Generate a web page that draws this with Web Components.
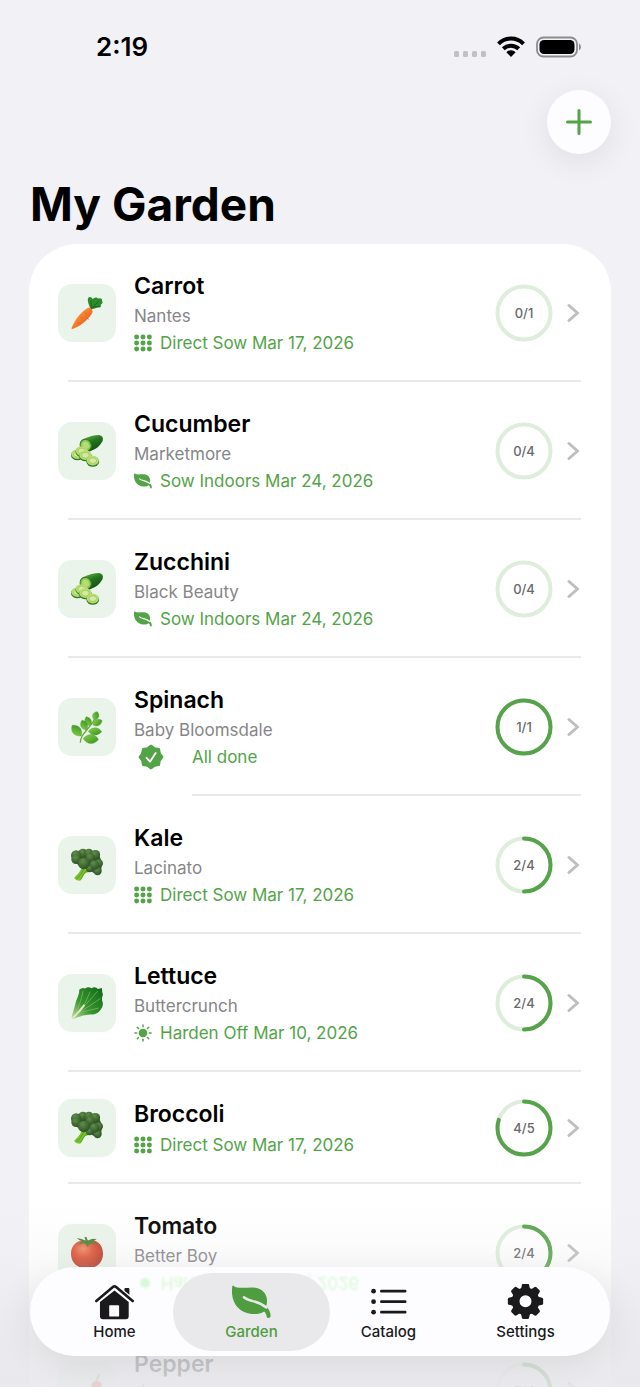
<!DOCTYPE html>
<html lang="en">
<head>
<meta charset="utf-8">
<meta name="viewport" content="width=device-width, initial-scale=1">
<title>My Garden</title>
<style>
  html, body { margin: 0; background: #f1f1f6; }
  body { font-family: Inter, "Liberation Sans", sans-serif; color: #000; }
</style>
</head>
<body>
<garden-app>
  <status-bar slot="status">2:19</status-bar>
  <add-button slot="action"></add-button>
  <span slot="title">My Garden</span>
  <plant-row art="carrot" done="0" total="1" icon="grid"><span slot="name">Carrot</span><span slot="variety">Nantes</span><span slot="task">Direct Sow Mar 17, 2026</span></plant-row>
  <plant-row art="cucumber" done="0" total="4" icon="leaf"><span slot="name">Cucumber</span><span slot="variety">Marketmore</span><span slot="task">Sow Indoors Mar 24, 2026</span></plant-row>
  <plant-row art="cucumber" done="0" total="4" icon="leaf"><span slot="name">Zucchini</span><span slot="variety">Black Beauty</span><span slot="task">Sow Indoors Mar 24, 2026</span></plant-row>
  <plant-row art="herb" done="1" total="1" icon="seal" complete><span slot="name">Spinach</span><span slot="variety">Baby Bloomsdale</span><span slot="task">All done</span></plant-row>
  <plant-row art="broccoli" done="2" total="4" icon="grid"><span slot="name">Kale</span><span slot="variety">Lacinato</span><span slot="task">Direct Sow Mar 17, 2026</span></plant-row>
  <plant-row art="lettuce" done="2" total="4" icon="sun"><span slot="name">Lettuce</span><span slot="variety">Buttercrunch</span><span slot="task">Harden Off Mar 10, 2026</span></plant-row>
  <plant-row art="broccoli" done="4" total="5" icon="grid" compact><span slot="name">Broccoli</span><span slot="task">Direct Sow Mar 17, 2026</span></plant-row>
  <plant-row art="tomato" done="2" total="4" icon="sun"><span slot="name">Tomato</span><span slot="variety">Better Boy</span><span slot="task">Harden Off Mar 10, 2026</span></plant-row>
  <plant-row art="pepper" done="2" total="4" icon="sun"><span slot="name">Pepper</span></plant-row>
  <tab-bar slot="tabs">
    <tab-item icon="home">Home</tab-item>
    <tab-item icon="leaf" selected>Garden</tab-item>
    <tab-item icon="list">Catalog</tab-item>
    <tab-item icon="gear">Settings</tab-item>
  </tab-bar>
</garden-app>

<script>
const sealPoints = Array.from({ length: 16 }, (_, i) => {
  const a = i * Math.PI / 8, r = i % 2 ? 36 : 43;
  return `${(50 + r * Math.sin(a)).toFixed(1)},${(50 - r * Math.cos(a)).toFixed(1)}`;
}).join(' ');

const turns = (n, shape) => Array.from({ length: n }, (_, i) => `<g transform="rotate(${i * 360 / n} 50 50)">${shape}</g>`).join('');

const LEAF = `<path fill="currentColor" d="M3 0C14 11 40 5 60 6C85 8 98 25 97 45C97 50 96 54 94 58C103 66 107 76 107 85C106 92 97 92 96 86C95 80 93 76 89 72C80 78 68 80 55 79C18 77-6 45 1 2Q1 0 3 0Z"/><path d="M33 33C50 47 70 40 95 61" fill="none" stroke="var(--vein,#fff)" stroke-width="7" stroke-linecap="round"/>`;

const ICONS = {
  leaf: `<svg aria-hidden="true" viewBox="0 0 108 92">${LEAF}</svg>`,
  grid: `<svg aria-hidden="true" viewBox="0 0 48 46"><g fill="currentColor">${[7, 24, 41].map(x => [7, 23, 39].map(y => `<circle cx="${x}" cy="${y}" r="6.6"/>`).join('')).join('')}</g></svg>`,
  sun: `<svg aria-hidden="true" viewBox="0 0 100 100"><circle cx="50" cy="50" r="24" fill="currentColor"/>${turns(8, '<path d="M50 5v10" stroke="currentColor" stroke-width="8" stroke-linecap="round"/>')}</svg>`,
  seal: `<svg aria-hidden="true" viewBox="0 0 100 100"><polygon points="${sealPoints}" fill="currentColor" stroke="currentColor" stroke-width="9" stroke-linejoin="round"/><path d="M33 53l13 15 22-33" fill="none" stroke="#fff" stroke-width="7" stroke-linecap="round" stroke-linejoin="round"/></svg>`,
  home: `<svg aria-hidden="true" viewBox="0 0 118 106"><path fill="currentColor" d="M89 14q0-3 3-3h9q3 0 3 3v28L89 30Z"/><path d="M4 51L59 6l55 45" fill="none" stroke="#fdfdff" stroke-width="18"/><path d="M4 50L55 7q4-3 8 0l51 43" fill="none" stroke="currentColor" stroke-width="8" stroke-linecap="round"/><path fill="currentColor" fill-rule="evenodd" d="M15 53L59 18l43 35v43q0 9-9 9H24q-9 0-9-9ZM45 63q-2 0-2 2v30q0 2 2 2h26q2 0 2-2V65q0-2-2-2Z"/></svg>`,
  list: `<svg aria-hidden="true" viewBox="0 0 104 106"><g fill="currentColor"><circle cx="8" cy="21" r="7"/><circle cx="8" cy="52" r="7"/><circle cx="8" cy="83" r="7"/></g><path d="M31 21h70M31 52h70M31 83h70" stroke="currentColor" stroke-width="8" stroke-linecap="round"/></svg>`,
  gear: `<svg aria-hidden="true" viewBox="-1 1 102 102">${turns(8, '<path fill="currentColor" d="M36 20L40 3q1-3 4-3h12q3 0 4 3l4 17Z"/>')}<circle cx="50" cy="50" r="28" fill="none" stroke="currentColor" stroke-width="22"/></svg>`
};

const leafAt = (x, y, a, l, w) => `<path transform="translate(${x} ${y}) rotate(${a})" d="M0 0C${l * .3} ${-w} ${l * .75} ${-w} ${l} 0C${l * .7} ${w} ${l * .3} ${w} 0 0Z" fill="url(#g)" stroke="#3f9a26" stroke-width="1"/>`;
const slice = (x, y) => `<ellipse cx="${x}" cy="${y + 3}" rx="20" ry="16" fill="#2f7d22"/><ellipse cx="${x}" cy="${y}" rx="19" ry="15" fill="#b9dc74"/><ellipse cx="${x}" cy="${y}" rx="12" ry="9" fill="#d5eaa0" stroke="#8fc04c" stroke-width="2"/>`;
const floret = (x, y, r) => `<circle cx="${x}" cy="${y}" r="${r}" fill="url(#g)"/>`;

const ART = {
  carrot: `<linearGradient id="g" x1="0" y1="0" x2="1" y2="1"><stop offset=".25" stop-color="#ff9a45"/><stop offset=".7" stop-color="#e8641b"/></linearGradient>
    <path d="M62 38C55 22 50 12 54 2Q62-3 68 6Q80-2 84 5Q98 0 97 12Q102 20 93 24Q96 34 84 33Q74 36 64 38Z" fill="#2f8a2b"/><path d="M60 40L88 12M64 36L62 12M68 32L90 28" stroke="#1d651f" stroke-width="3" fill="none"/>
    <path d="M46 38Q58 28 66 38Q70 46 64 54C50 74 26 94 4 100Q0 100 2 96C12 72 28 50 46 38Z" fill="url(#g)"/><path d="M42 48l8 6M30 62l7 5M50 66l6 4M20 78l6 4" stroke="#d65a17" stroke-width="2"/>`,
  cucumber: `<linearGradient id="g" x1="0" y1="0" x2=".5" y2="1"><stop offset="0" stop-color="#6db94a"/><stop offset=".5" stop-color="#24741f"/><stop offset="1" stop-color="#114f14"/></linearGradient>
    <path d="M36 14Q66 0 88 0Q103 4 99 18C92 34 76 46 56 52Z" fill="url(#g)"/><ellipse cx="46" cy="32" rx="17" ry="19" transform="rotate(-30 46 32)" fill="#8fc653" stroke="#2e7a22" stroke-width="3"/><ellipse cx="46" cy="32" rx="10" ry="12" transform="rotate(-30 46 32)" fill="#b6dc78"/>
    ${slice(20, 60)}${slice(34, 50)}${slice(45, 63)}${slice(68, 80)}`,
  herb: `<linearGradient id="g" x1="0" y1="0" x2="1" y2="1"><stop offset="0" stop-color="#8ed14a"/><stop offset="1" stop-color="#2f9020"/></linearGradient>
    <path d="M29 99C30 72 52 62 76 24" fill="none" stroke="#69a83b" stroke-width="4"/>
    ${leafAt(72, 28, -68, 28, 13)}${leafAt(68, 43, -24, 32, 13)}${leafAt(60, 46, -114, 31, 13)}${leafAt(48, 60, -114, 34, 14)}${leafAt(54, 63, 2, 42, 15)}${leafAt(32, 78, -130, 44, 18)}${leafAt(38, 86, 4, 48, 19)}`,
  broccoli: `<radialGradient id="g" cx=".4" cy=".3" r=".7"><stop offset="0" stop-color="#638c4b"/><stop offset="1" stop-color="#2c5426"/></radialGradient>
    <path d="M35 50Q34 68 10 90Q14 99 29 99Q38 84 44 76L72 66L60 48Z" fill="#7cc02f"/><path d="M40 62Q34 78 18 93M50 66Q38 78 30 96" stroke="#539e20" stroke-width="3" fill="none"/>
    <path d="M10 12Q46-8 80 12Q102 30 94 70Q70 85 58 62Q20 60 6 30Z" fill="#31582a"/>
    ${floret(37, 13, 14)}${floret(56, 13, 14)}${floret(16, 20, 16)}${floret(76, 18, 15)}${floret(87, 45, 13)}${floret(83, 69, 13)}${floret(60, 27, 14)}${floret(16, 32, 15)}${floret(73, 50, 15)}${floret(58, 62, 11)}${floret(40, 45, 18)}`,
  lettuce: `<linearGradient id="g" x1="1" y1="0" x2="0" y2="1"><stop offset=".1" stop-color="#14701c"/><stop offset=".6" stop-color="#38962f"/><stop offset="1" stop-color="#c9dda0"/></linearGradient>
    <path d="M2 92C10 70 12 50 22 28Q26 20 26 8Q36 0 44 5Q54-3 64 4Q76-3 84 6L97 3Q96 14 100 24Q94 36 99 48Q102 62 92 72Q82 86 66 86Q40 84 14 98Q2 102 2 92Z" fill="url(#g)"/>
    <path d="M8 94C36 66 60 40 84 12M10 92C24 64 32 40 38 12M26 76Q48 50 60 14M24 80Q58 60 92 36M30 79Q60 72 86 66" fill="none" stroke="#8cc070" stroke-width="2"/><path d="M6 96Q26 78 42 56" stroke="#e2e9c8" stroke-width="6" fill="none"/>`,
  tomato: `<radialGradient id="g" cx=".38" cy=".3" r=".75"><stop offset="0" stop-color="#f08a62"/><stop offset=".4" stop-color="#de5030"/><stop offset="1" stop-color="#b02d1b"/></radialGradient>
    <path d="M50 12C82 4 101 26 100 54C99 84 76 98 50 98S1 84 0 54C-1 26 20 6 50 12Z" fill="url(#g)"/><path d="M18 3Q34 4 46 12L42 0h6l5 12Q68 2 80 8Q72 12 66 15Q80 18 82 26Q70 20 60 20L52 31L44 20Q34 19 22 26Q28 16 36 14Q26 12 18 3Z" fill="#4c7b32"/>`,
  pepper: `<path d="M90 0Q80 8 80 22" stroke="#c98d7c" stroke-width="6" fill="none"/><path d="M66 24Q80 12 96 26C98 64 60 96 4 98C44 80 60 56 66 24Z" fill="#e0402c"/>`
};

class Base extends HTMLElement {
  connectedCallback() {
    if (!this.shadowRoot) this.attachShadow({ mode: 'open' }).innerHTML = this.render();
  }
  get(name) { return this.getAttribute(name); }
}

customElements.define('status-bar', class extends Base {
  render() {
    return `<style>
      :host { display: flex; align-items: center; justify-content: space-between; padding: 32px 59px 28px 96px; font-size: 26px; line-height: 30px; font-weight: 600; }
      .signs { display: flex; align-items: center; gap: 11px; }
      svg { display: block; }
    </style><span><slot></slot></span>
    <div class="signs" aria-hidden="true">
      <svg width="33" height="22" viewBox="0 0 33 22" fill="#c0c0c5"><rect x="1" y="15" width="5" height="6" rx="1.5"/><rect x="10" y="15" width="5" height="6" rx="1.5"/><rect x="19" y="15" width="5" height="6" rx="1.5"/><rect x="28" y="15" width="5" height="6" rx="1.5"/></svg>
      <svg width="28" height="22" viewBox="0 0 28 22" fill="none" stroke="#000" stroke-width="4"><path d="M1.5 7.8a17.5 17.5 0 0 1 25 0"/><path d="M6.3 12.8a11 11 0 0 1 15.4 0"/><path d="M9.4 16.2a6.4 6.4 0 0 1 9.2 0L14 21Z" fill="#000" stroke="none"/></svg>
      <svg width="45" height="22" viewBox="0 0 45 22"><rect x="1" y="1.5" width="40" height="19" rx="6.5" fill="none" stroke="#8c8c90" stroke-width="1.8"/><rect x="3.5" y="4" width="35" height="14" rx="4.5"/><path d="M43 7.5q2 .8 2 3.5t-2 3.5Z" fill="#8c8c90"/></svg>
    </div>`;
  }
});

customElements.define('add-button', class extends Base {
  render() {
    return `<style>
      :host { display: block; }
      button { display: grid; place-items: center; width: 64px; height: 64px; padding: 0; border: 0; border-radius: 50%; background: #fdfdff; color: #52a447; box-shadow: 0 8px 32px rgba(0,0,0,.08); }
    </style><button type="button" aria-label="Add plant"><svg width="28" height="28" viewBox="0 0 28 28" fill="none" stroke="currentColor" stroke-width="3" stroke-linecap="round"><path d="M14 2.5v23M2.5 14h23"/></svg></button>`;
  }
});

customElements.define('progress-ring', class extends Base {
  render() {
    const done = +this.get('done'), total = +this.get('total');
    return `<style>
      :host { display: grid; width: 58px; height: 58px; place-items: center; font-size: 13px; line-height: 16px; font-weight: 500; color: #69696b; }
      svg, span { grid-area: 1 / 1; }
      svg { display: block; transform: rotate(-90deg); }
    </style><svg width="58" height="58" viewBox="0 0 58 58" fill="none" stroke-width="4" aria-hidden="true"><circle cx="29" cy="29" r="26.5" stroke="#deeddc"/>${done ? `<circle cx="29" cy="29" r="26.5" stroke="#57a34b" stroke-linecap="round" pathLength="100" stroke-dasharray="${100 * done / total} 100"/>` : ''}</svg><span>${done}/${total}</span>`;
  }
});

customElements.define('plant-row', class extends Base {
  render() {
    return `<style>
      :host { display: block; --green: #52a447; }
      a { display: grid; grid-template-columns: 58px minmax(0, 1fr) 58px 27px; align-items: center; padding: 26px 31px 24px 29px; color: inherit; text-decoration: none; }
      .tile { display: grid; place-items: center; width: 58px; height: 58px; border-radius: 14px; background: #eaf4ea; }
      .tile svg { display: block; width: 32px; height: 32px; overflow: visible; }
      .text { display: grid; row-gap: 2px; min-height: 86px; margin: 0 18px; align-content: start; }
      :host([compact]) .text { min-height: 60px; }
      .name { font-size: 23px; line-height: 32px; font-weight: 600; }
      .variety { font-size: 17px; line-height: 24px; color: #868688; }
      .task { display: flex; align-items: center; gap: 8px; font-size: 17px; line-height: 26px; color: var(--green); }
      .task svg { display: block; width: 18px; height: 18px; }
      :host([complete]) .task { gap: 24px; }
      :host([complete]) .task svg { width: 34px; height: 26px; }
      .chevron { display: block; justify-self: end; }
      .line { height: 2px; margin: 0 30px 0 39px; background: #e9e9eb; }
      :host([complete]) .line { margin-left: 163px; }
    </style>
    <a href="#${this.get('art')}">
      <span class="tile"><svg viewBox="0 0 100 100" aria-hidden="true">${ART[this.get('art')]}</svg></span>
      <span class="text">
        <span class="name"><slot name="name"></slot></span>
        ${this.hasAttribute('compact') ? '' : '<span class="variety"><slot name="variety"></slot></span>'}
        <span class="task">${ICONS[this.get('icon')]}<slot name="task"></slot></span>
      </span>
      <progress-ring done="${this.get('done')}" total="${this.get('total')}"></progress-ring>
      <svg class="chevron" width="13" height="20" viewBox="0 0 13 20" fill="none" stroke="#bebec1" stroke-width="3" stroke-linecap="round" stroke-linejoin="round" aria-hidden="true"><path d="M2 2.5l8.5 7.5L2 17.5"/></svg>
    </a><div class="line"></div>`;
  }
});

customElements.define('tab-item', class extends Base {
  render() {
    return `<style>
      :host { display: block; flex: 1; }
      button { position: relative; display: flex; flex-direction: column; align-items: center; gap: 2px; width: 100%; padding: 11px 0 9px; border: 0; background: none; font-family: inherit; font-size: 15px; line-height: 20px; font-weight: 500; color: #1a1a1c; }
      :host([selected]) button { color: #509c40; --vein: #e9e9eb; }
      :host([selected]) button::before { content: ""; position: absolute; inset: 0 -10px; border-radius: 39px; background: #e9e9eb; }
      svg { display: block; width: 39px; height: 36px; position: relative; }
      span { position: relative; }
    </style><button type="button"${this.hasAttribute('selected') ? ' aria-current="page"' : ''}>${ICONS[this.get('icon')]}<span><slot></slot></span></button>`;
  }
});

customElements.define('tab-bar', class extends Base {
  render() {
    return `<style>
      :host { display: block; padding: 66px 30px 31px; background: linear-gradient(rgba(232,232,236,0), rgba(232,232,236,.18) 58px, rgba(232,232,236,.82) 146px, rgba(232,232,236,.88)); }
      nav { position: relative; display: flex; padding: 6px 16px 5px; border-radius: 45px; background: #fdfdff; box-shadow: 0 8px 36px rgba(0,0,0,.08); }
      .glow { position: absolute; top: 4px; left: 108px; display: flex; align-items: center; gap: 8px; font-size: 17px; line-height: 24px; color: #d9f8d7; white-space: nowrap; transform: scaleY(-1); filter: blur(1px); }
      .glow i { width: 10px; height: 10px; margin: 0 3px 0 2px; border-radius: 50%; background: currentColor; }
    </style><nav aria-label="Main"><div class="glow" aria-hidden="true"><i></i>Harden Off Mar 10, 2026</div><slot></slot></nav>`;
  }
});

customElements.define('garden-app', class extends Base {
  render() {
    return `<style>
      :host { display: grid; grid-template: minmax(0, 1fr) / minmax(0, 1fr); height: 100vh; overflow: hidden; background: #f1f1f6; }
      main { grid-area: 1 / 1; overflow-y: auto; scrollbar-width: none; }
      .bar { display: flex; justify-content: flex-end; padding: 0 29px; }
      h1 { margin: 20px 30px 10px; font-size: 46px; line-height: 60px; font-weight: 700; }
      .card { margin: 0 29px; border-radius: 48px 48px 0 0; background: #fff; }
      .tabs { grid-area: 1 / 1; align-self: end; z-index: 1; }
    </style>
    <main><slot name="status"></slot><div class="bar"><slot name="action"></slot></div><h1><slot name="title"></slot></h1><section class="card"><slot></slot></section></main>
    <div class="tabs"><slot name="tabs"></slot></div>`;
  }
});
</script>
</body>
</html>
